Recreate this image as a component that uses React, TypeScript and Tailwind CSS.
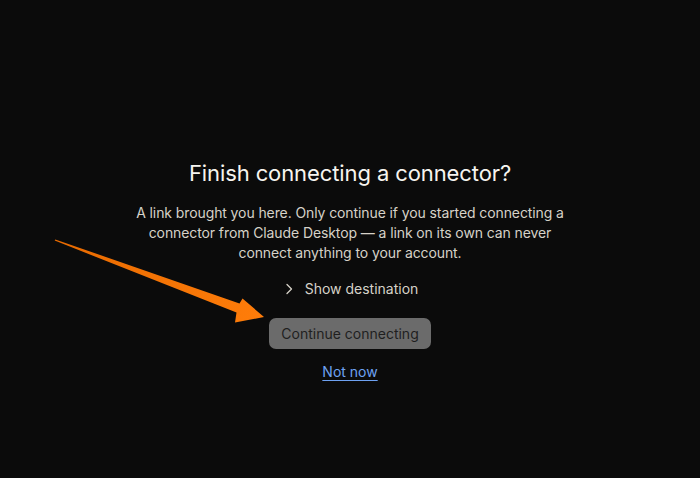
import React from "react";

export default function App() {
  return (
    <div className="relative w-full min-h-[478px] bg-[#0b0b0b] flex flex-col items-center pt-[158px]" style={{ fontFamily: "Inter, 'Noto Sans', sans-serif" }}>
      <h1 className="text-[22px] leading-[30px] text-[#f7f5f0] font-normal tracking-[-0.1px]">Finish connecting a connector?</h1>
      <p className="mt-[15px] w-[436px] text-center text-[14px] leading-[20px] tracking-[-0.1px] text-[#d6d2c8]">
        A link brought you here. Only continue if you started connecting a connector from Claude Desktop — a link on its own can never connect anything to your account.
      </p>
      <button className="mt-[16px] flex items-center gap-[9px] text-[14px] leading-[20px] text-[#d6d2c8]">
        <svg width="14" height="14" viewBox="0 0 14 14" fill="none" stroke="#d6d2c8" strokeWidth="1.3" strokeLinecap="round" strokeLinejoin="round">
          <path d="M5 2.5 L9.5 7 L5 11.5" />
        </svg>
        <span>Show destination</span>
      </button>
      <button className="mt-[19px] h-[31px] w-[162px] rounded-[7px] bg-[#6b6b6b] text-[14px] text-[#1f1f1f]">Continue connecting</button>
      <a className="mt-[13px] text-[14px] leading-[20px] text-[#6ea2f2] underline underline-offset-[3px]">Not now</a>
      <svg className="absolute left-0 top-0 pointer-events-none" width="700" height="478" viewBox="0 0 700 478">
        <defs>
          <linearGradient id="g" x1="55" y1="240" x2="265" y2="318" gradientUnits="userSpaceOnUse">
            <stop offset="0" stopColor="#e86a00" />
            <stop offset="1" stopColor="#ff7d0a" />
          </linearGradient>
        </defs>
        <polygon
          fill="url(#g)"
          points="55.3,239.4 239.5,303.5 242.5,298.5 264,317 235,322.5 236.5,312.5 54.7,240.6"
        />
      </svg>
    </div>
  );
}
